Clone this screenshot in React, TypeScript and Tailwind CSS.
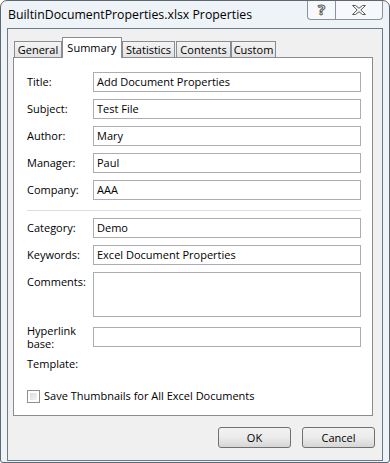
import React from "react";

const font = "font-['Open_Sans',_'Noto_Sans',_sans-serif]";

function Box({ value = "", h = "h-[20px]" }: { value?: string; h?: string }) {
  return (
    <div className={`w-[268px] ${h} border border-[#abadb3] bg-white pl-[3px] flex items-start`}>
      <span className="text-[11px] leading-[18px] text-black whitespace-nowrap">{value}</span>
    </div>
  );
}

function Row({ label, value, mt = "mt-[7px]" }: { label: string; value: string; mt?: string }) {
  return (
    <div className={`flex items-center h-[20px] ${mt}`}>
      <div className="w-[66px] text-[11px] leading-[16px] text-black">{label}</div>
      <Box value={value} />
    </div>
  );
}

function Tab({ label, w, selected, ml = "" }: { label: string; w: string; selected?: boolean; ml?: string }) {
  if (selected) {
    return (
      <div
        className={`${w} ${ml} h-[21px] bg-white border border-b-0 border-[#898c95] flex justify-center pt-[2px] text-[11px] leading-[16px] text-black`}
      >
        {label}
      </div>
    );
  }
  return (
    <div
      className={`${w} ${ml} h-[16px] mb-[1px] border border-b-0 border-[#898c95] bg-gradient-to-b from-[#f4f4f4] to-[#e2e2e2] flex justify-center items-center text-[11px] leading-[14px] text-black`}
    >
      {label}
    </div>
  );
}

function Button({ label }: { label: string }) {
  return (
    <div className="w-[73px] h-[21px] rounded-[3px] border border-[#707070] bg-gradient-to-b from-[#f2f2f2] via-[#ebebeb] to-[#d6d6d6] flex items-center justify-center text-[11px] leading-[14px] text-black">
      {label}
    </div>
  );
}

export default function App() {
  return (
    <div className={`w-[390px] h-[463px] ${font} bg-white`}>
      <div className="w-[390px] h-[463px] border border-[#5e6670] rounded-t-[7px] rounded-b-[3px] bg-[#eef3f8] flex flex-col overflow-hidden">
        {/* Title bar */}
        <div className="h-[27px] flex items-start justify-between">
          <div className="pl-[7px] pt-[5px] text-[12.3px] leading-[18px] text-black whitespace-nowrap">
            BuiltinDocumentProperties.xlsx Properties
          </div>
          <div className="mr-[6px] -mt-px flex h-[20px] border border-t-0 border-[#8a929c] rounded-b-[4px] bg-[#f6f8fb]">
            <div className="w-[28px] h-full border-r border-[#8a929c] flex items-center justify-center">
              <span className="text-[15px] font-bold leading-[15px] text-transparent [-webkit-text-stroke:1px_#5a5a5a]">?</span>
            </div>
            <div className="w-[46px] h-full flex items-center justify-center">
              <svg width="14" height="10" viewBox="0 0 14 10">
                <path
                  d="M0.5 0.5 H3.5 L7 3.3 L10.5 0.5 H13.5 L8.8 5 L13.5 9.5 H10.5 L7 6.7 L3.5 9.5 H0.5 L5.2 5 Z"
                  fill="#fafafa"
                  stroke="#5a5a5a"
                  strokeWidth="1"
                />
              </svg>
            </div>
          </div>
        </div>
        {/* Client area */}
        <div className="flex-1 mx-[6px] mb-[1px] border border-[#6b7b85] bg-[#f0f0f0] flex flex-col pt-[8px]">
          <div className="relative z-10 flex items-end h-[21px] -mb-px pl-[6px]">
            <Tab label="General" w="w-[48px]" />
            <Tab label="Summary" w="w-[60px]" selected />
            <Tab label="Statistics" w="w-[53px]" />
            <Tab label="Contents" w="w-[55px]" ml="ml-[1px]" />
            <Tab label="Custom" w="w-[45px]" />
          </div>
          <div className="ml-[5px] w-[360px] h-[359px] border border-[#898c95] bg-white pl-[13px] pt-[14px] flex flex-col">
            <Row label="Title:" value="Add Document Properties" mt="" />
            <Row label="Subject:" value="Test File" />
            <Row label="Author:" value="Mary" />
            <Row label="Manager:" value="Paul" />
            <Row label="Company:" value="AAA" />
            <div className="mt-[10px] w-[334px] h-px bg-[#d5dfe5]" />
            <Row label="Category:" value="Demo" />
            <Row label="Keywords:" value="Excel Document Properties" />
            <div className="flex items-start mt-[7px]">
              <div className="w-[66px] h-[20px] flex items-center text-[11px] leading-[16px] text-black">Comments:</div>
              <Box h="h-[45px]" />
            </div>
            <div className="flex items-center h-[20px] mt-[10px]">
              <div className="w-[66px] text-[11px] leading-[13px] text-black">
                Hyperlink
                <br />
                base:
              </div>
              <Box />
            </div>
            <div className="flex items-center h-[20px] mt-[7px]">
              <div className="w-[66px] text-[11px] leading-[16px] text-black">Template:</div>
            </div>
            <div className="flex items-center h-[20px] mt-[12px]">
              <div className="w-[13px] h-[13px] border border-[#8e8f8f] bg-white p-[2px]">
                <div className="w-full h-full bg-gradient-to-br from-[#dcdcdc] to-[#f4f4f4]" />
              </div>
              <span className="ml-[4px] text-[11px] leading-[16px] text-black whitespace-nowrap">
                Save Thumbnails for All Excel Documents
              </span>
            </div>
          </div>
          <div className="flex justify-end gap-[11px] mt-[11px] pr-[7px]">
            <Button label="OK" />
            <Button label="Cancel" />
          </div>
        </div>
      </div>
    </div>
  );
}
